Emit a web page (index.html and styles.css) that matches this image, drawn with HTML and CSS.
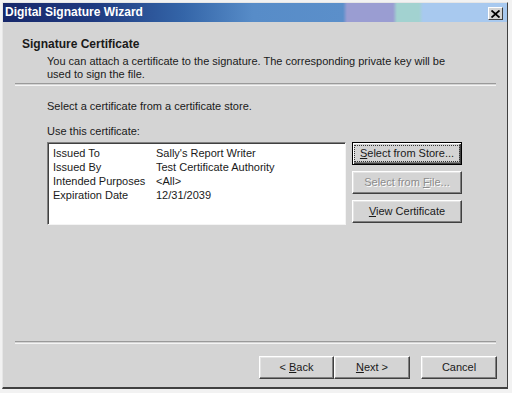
FILE: index.html
```html
<!DOCTYPE html>
<html>
<head>
<meta charset="utf-8">
<link rel="stylesheet" href="styles.css">
</head>
<body>
<div class="window">
  <div class="titlebar">
    <span class="title">Digital Signature Wizard</span>
    <span class="close"><svg width="9" height="8" viewBox="0 0 9 8"><path d="M0.5 0.5 L8.5 7.5 M8.5 0.5 L0.5 7.5" stroke="#000" stroke-width="1.8" fill="none"/></svg></span>
  </div>
  <div class="header">
    <div class="h-title">Signature Certificate</div>
    <div class="h-desc">You can attach a certificate to the signature. The corresponding private key will be<br>used to sign the file.</div>
  </div>
  <div class="sep"></div>
  <div class="content">
    <div class="line1">Select a certificate from a certificate store.</div>
    <div class="line2">Use this certificate:</div>
    <div class="row">
      <div class="listbox">
        <div class="lb-row"><span class="lb-key">Issued To</span><span>Sally's Report Writer</span></div>
        <div class="lb-row"><span class="lb-key">Issued By</span><span>Test Certificate Authority</span></div>
        <div class="lb-row"><span class="lb-key">Intended Purposes</span><span>&lt;All&gt;</span></div>
        <div class="lb-row"><span class="lb-key">Expiration Date</span><span>12/31/2039</span></div>
      </div>
      <div class="btncol">
        <div class="btn default"><span class="focus"><u>S</u>elect from Store...</span></div>
        <div class="btn disabled"><span>Select from <u>F</u>ile...</span></div>
        <div class="btn"><span><u>V</u>iew Certificate</span></div>
      </div>
    </div>
  </div>
  <div class="sep"></div>
  <div class="footer">
    <div class="btn wb back"><span>&lt; <u>B</u>ack</span></div>
    <div class="btn wb next"><span><u>N</u>ext &gt;</span></div>
    <div class="btn wb cancel"><span>Cancel</span></div>
  </div>
</div>
</body>
</html>
```

FILE: styles.css
```css
html, body {
  margin: 0;
  padding: 0;
  background: #f2f2f2;
}
body {
  font-family: "Liberation Sans", Arial, sans-serif;
  font-size: 11px;
  color: #1a1a1a;
}
.window {
  margin: 2px 0 0 2px;
  width: 506px;
  height: 387px;
  box-sizing: border-box;
  background: #d4d4d4;
  border-top: 1px solid #e6e6e6;
  border-left: 1px solid #e6e6e6;
  border-right: 1px solid #404040;
  border-bottom: 2px solid #404040;
  display: flex;
  flex-direction: column;
}
.titlebar {
  height: 19px;
  display: flex;
  align-items: flex-end;
  justify-content: space-between;
  padding: 0 4px 2px 2px;
  box-sizing: border-box;
  background: linear-gradient(to right,
    #17286a 0px, #1f3a80 90px, #3465a8 180px, #578cc8 250px, #5b8fca 340px,
    #9a9dd2 344px, #9a9dd2 390px, #a2d2d0 394px, #a2d2d0 416px, #a8c9ef 420px, #a8c9ef 100%);
}
.title {
  color: #fff;
  font-weight: bold;
  font-size: 12px;
  line-height: 15px;
  align-self: center;
  padding-top: 1px;
}
.close {
  width: 15px;
  height: 13px;
  box-sizing: border-box;
  background: #d4d4d4;
  border: 1px solid;
  border-color: #fff #404040 #404040 #fff;
  display: flex;
  align-items: center;
  justify-content: center;
}
.header {
  padding: 15px 0 0 19px;
}
.h-title {
  font-weight: bold;
  font-size: 12px;
  line-height: 14px;
}
.h-desc {
  margin: 4px 0 0 25px;
  line-height: 13px;
}
.sep {
  margin: 2px 0 0 12px;
  width: 481px;
  height: 1px;
  border-top: 1px solid #9a9a9a;
  border-bottom: 1px solid #f4f4f4;
}
.content {
  flex: 1;
  padding-left: 44px;
}
.line1 {
  margin-top: 13px;
  line-height: 14px;
}
.line2 {
  margin-top: 11px;
  line-height: 14px;
}
.row {
  margin-top: 4px;
  display: flex;
  gap: 6px;
}
.listbox {
  width: 299px;
  height: 83px;
  box-sizing: border-box;
  background: #fff;
  border: 1px solid;
  border-color: #808080 #f4f4f4 #f4f4f4 #808080;
  box-shadow: inset 1px 1px #404040;
  padding: 3px 0 0 5px;
}
.lb-row {
  display: flex;
  line-height: 14px;
}
.lb-key {
  width: 103px;
}
.btncol {
  display: flex;
  flex-direction: column;
  gap: 6px;
}
.btn {
  width: 110px;
  height: 23px;
  box-sizing: border-box;
  background: #d4d4d4;
  border: 1px solid;
  border-color: #fff #404040 #404040 #fff;
  box-shadow: inset -1px -1px #808080, inset 1px 1px #e4e4e4;
  display: flex;
  align-items: center;
  justify-content: center;
  line-height: 13px;
}
.btn.default {
  border: 1px solid #000;
  box-shadow: inset 1px 1px #fff, inset -1px -1px #404040, inset -2px -2px #808080;
}
.focus {
  border: 1px dotted #333;
  padding: 1px 4px;
  width: 96px;
  text-align: center;
}
.btn.disabled {
  color: #8c8c8c;
  text-shadow: 1px 1px #fff;
}
.footer {
  display: flex;
  justify-content: flex-end;
  padding: 12px 10px 8px 0;
}
.wb {
  width: 76px;
  height: 23px;
}
.wb.back {
  width: 75px;
}
.wb.cancel {
  margin-left: 11px;
}
```
